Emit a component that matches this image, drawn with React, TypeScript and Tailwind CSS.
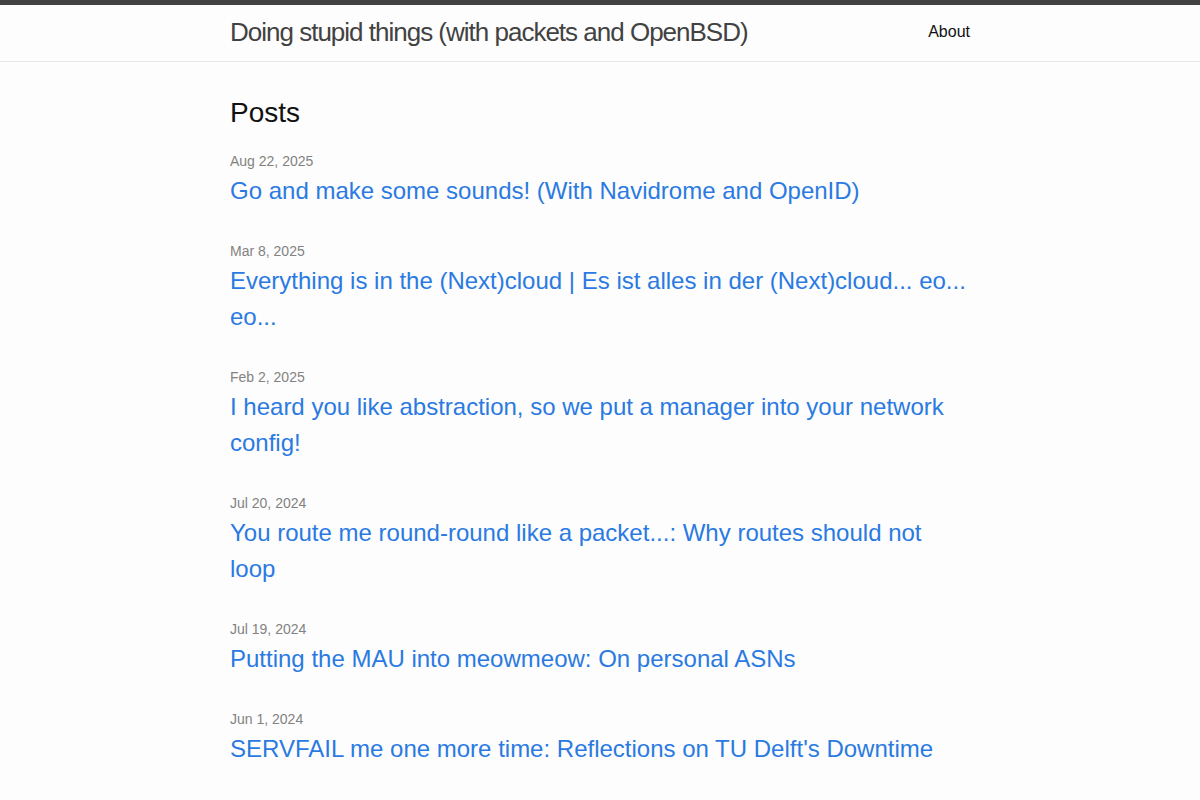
const posts = [
  { date: 'Aug 22, 2025', title: 'Go and make some sounds! (With Navidrome and OpenID)' },
  { date: 'Mar 8, 2025', title: 'Everything is in the (Next)cloud | Es ist alles in der (Next)cloud... eo... eo...' },
  { date: 'Feb 2, 2025', title: 'I heard you like abstraction, so we put a manager into your network config!' },
  { date: 'Jul 20, 2024', title: 'You route me round-round like a packet...: Why routes should not loop' },
  { date: 'Jul 19, 2024', title: 'Putting the MAU into meowmeow: On personal ASNs' },
  { date: 'Jun 1, 2024', title: "SERVFAIL me one more time: Reflections on TU Delft's Downtime" },
]

export default function App() {
  return (
    <div className="min-h-screen bg-[#fdfdfd] text-[#111111] text-base leading-normal [font-family:'Liberation_Sans',Arial,sans-serif]">
      {/* Header */}
      <header className="border-t-[5px] border-t-[#424242] border-b border-b-[#e8e8e8]">
        <div className="max-w-[800px] mx-auto px-[30px] flex justify-between items-start h-14">
          <a href="#" className="text-[26px] leading-[54px] tracking-[-1px] text-[#424242]">
            Doing stupid things (with packets and OpenBSD)
          </a>
          <nav className="leading-[54px]">
            <a href="#" className="text-[#111111]">About</a>
          </nav>
        </div>
      </header>

      {/* Posts */}
      <main className="py-[30px]">
        <div className="max-w-[800px] mx-auto px-[30px]">
          <h2 className="text-[28px] leading-[42px] mb-[17px]">Posts</h2>
          <ul>
            {posts.map((post) => (
              <li key={post.title} className="mb-[32px]">
                <span className="block text-sm leading-[21px] text-[#828282]">{post.date}</span>
                <h3 className="pt-px">
                  <a href="#" className="block text-2xl leading-9 text-[#2a7ae2]">{post.title}</a>
                </h3>
              </li>
            ))}
          </ul>
        </div>
      </main>
    </div>
  )
}
